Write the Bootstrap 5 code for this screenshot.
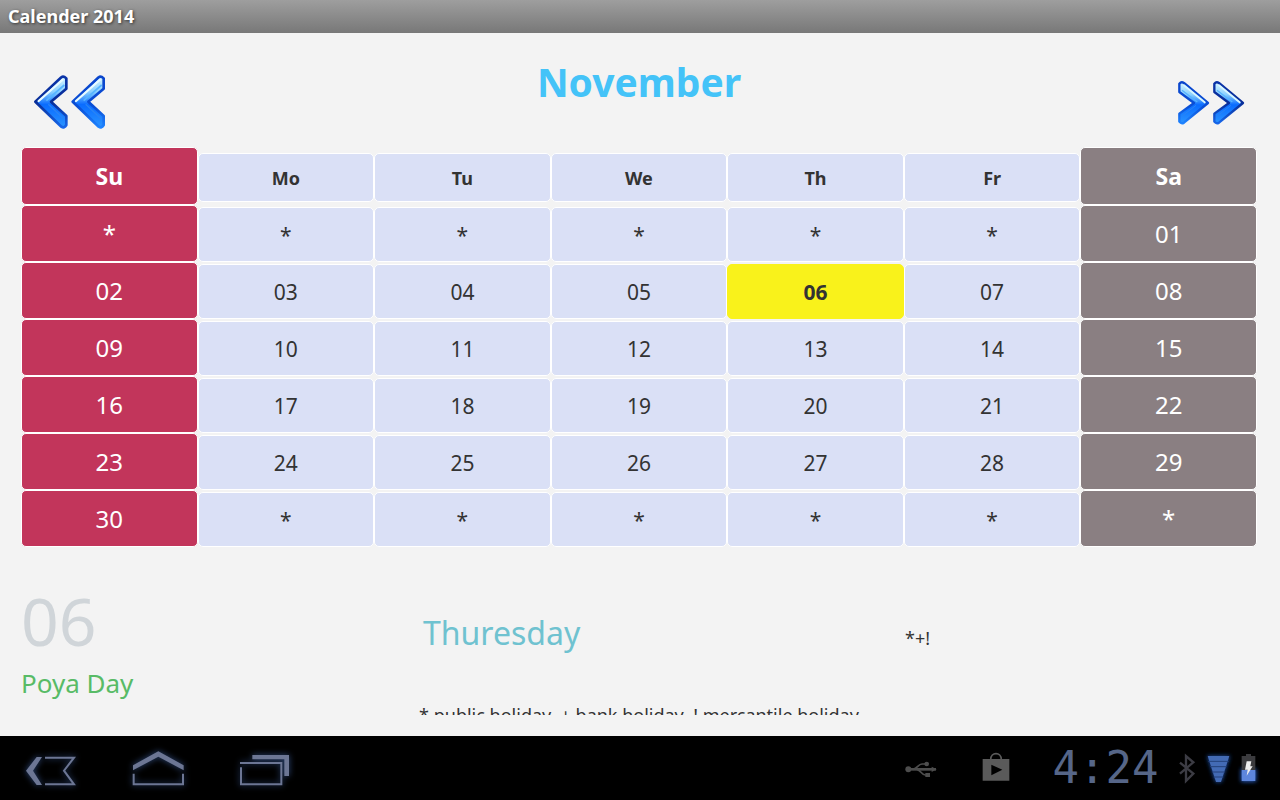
<!DOCTYPE html>
<html lang="en">
<head>
<meta charset="utf-8">
<meta name="viewport" content="width=device-width, initial-scale=1">
<title>Calender 2014</title>
<link href="https://cdn.jsdelivr.net/npm/bootstrap@5.3.0/dist/css/bootstrap.min.css" rel="stylesheet">
<style>
  body { font-family: "Noto Sans", "Open Sans", sans-serif; background: #f3f3f3; color: #333; }
  .app-title { height: 33px; padding: 0 8px; font-size: 18px; line-height: 32px; background: linear-gradient(#9e9e9e, #787878); text-shadow: 1px 1px 3px #333; }
  .screen { padding: 0 23px 21px 21px; }
  .month-bar { height: 114px; flex-shrink: 0; }
  .month-name { font-size: 39px; line-height: 52px; color: #44c3f8; padding-top: 23px; }
  .step-btn { flex: 1 0 0; padding-top: 26px; }
  .step-btn svg { display: block; }
  .days { table-layout: fixed; border-collapse: separate; border-spacing: 0; flex-shrink: 0; }
  .days th, .days td { padding: 2px 0 0; height: 57px; vertical-align: top; text-align: center; }
  .days .end { padding: 0; }
  .day { display: block; width: 100%; height: 55px; border: 1px solid #fff; border-radius: 5px; padding: 1px 0 0; background: #dae0f6; color: #333; font-size: 21px; line-height: 53px; }
  .days thead th { height: 58px; }
  .days thead .day { height: 49px; margin-top: 4px; font-size: 18px; line-height: 47px; }
  .end .day { height: 57px; padding-top: 0; font-size: 24px; line-height: 55px; color: #fff; }
  .days thead .end .day { height: 58px; margin-top: 0; font-size: 23px; line-height: 56px; }
  .sun .day { background: #c2355b; }
  .sat .day { background: #8a7f82; }
  .day.today { background: #f9f21b; border-color: #f9f21b; font-weight: 700; }
  .info { display: grid; grid-template-columns: 402fr 482fr 352fr; flex-shrink: 0; padding-top: 32px; }
  .big-date { font-size: 66px; line-height: 82px; color: #d0d5d9; }
  .weekday { font-size: 32px; line-height: 44px; color: #6fc2d0; padding-top: 32px; }
  .flags { font-size: 18px; line-height: 28px; padding-top: 45px; }
  .holiday { font-size: 26px; line-height: 44px; color: #58bb66; }
  .legend-line { font-size: 18px; line-height: 20px; flex-shrink: 0; }
  .sysbar { height: 64px; flex-shrink: 0; padding: 0 19px 0 10px; }
  .nav-keys { gap: 28px; }
  .nav-keys svg { display: block; filter: drop-shadow(0 0 3px #2f4a7c); }
  .clock { font-family: "DejaVu Sans Mono", monospace; font-size: 44px; line-height: 64px; color: #566688; width: 131px; text-align: center; }
</style>
</head>
<body>
<div class="d-flex flex-column vh-100">
  <header class="app-title text-white fw-bold flex-shrink-0">Calender 2014</header>

  <main class="screen flex-grow-1 d-flex flex-column overflow-hidden">
    <div class="d-flex flex-column flex-grow-1 overflow-hidden">
    <div class="month-bar d-flex align-items-start">
      <div class="step-btn d-flex">
        <button type="button" class="btn border-0 p-0" aria-label="Previous month">
          <svg width="100" height="84" viewBox="63 177 300 252">
            <defs>
              <linearGradient id="blue" x1="0" y1="0" x2="0" y2="1"><stop offset="0" stop-color="#d5f5ff"/><stop offset=".3" stop-color="#8bd0ff"/><stop offset=".55" stop-color="#0a6cff"/><stop offset="1" stop-color="#2a94ff"/></linearGradient>
              <linearGradient id="rim" x1="0" y1="0" x2="0" y2="1"><stop offset="0" stop-color="#0a33a8"/><stop offset=".5" stop-color="#082d98"/><stop offset="1" stop-color="#1767ea"/></linearGradient>
              <linearGradient id="rim2" x1="0" y1="0" x2="0" y2="1"><stop offset="0" stop-color="#0a45cc"/><stop offset=".6" stop-color="#0a4fd6"/><stop offset="1" stop-color="#1e83ff"/></linearGradient>
              <g id="chev"><path d="M106 305 184 232Q190 226 199 235V266L153 305 199 348V375Q193 386 184 380Z" fill="url(#blue)" stroke-width="8" stroke-linejoin="round"/><path d="M116 303 187 240" stroke="#e8fbff" stroke-width="7" stroke-linecap="round"/><path d="M139 302 193 255" stroke="#56b4ff" stroke-width="5"/><path d="M145 313 191 356" stroke="#2a84f4" stroke-width="4"/></g>
            </defs>
            <use href="#chev" stroke="url(#rim)"/>
            <use href="#chev" x="112" stroke="url(#rim2)"/>
          </svg>
        </button>
      </div>
      <h1 class="month-name fw-bold m-0">November</h1>
      <div class="step-btn d-flex justify-content-end">
        <button type="button" class="btn border-0 p-0" aria-label="Next month">
          <svg width="90" height="84" viewBox="261 -3 270 252">
            <defs><g id="chevR"><path d="M384 129 312 69Q304 64 298 71V96L342 129 298 161V185Q304 193 312 188Z" fill="url(#blue)" stroke-width="7" stroke-linejoin="round"/><path d="M374 127 312 76" stroke="#d8f6ff" stroke-width="6" stroke-linecap="round"/><path d="M352 126 306 91" stroke="#56b4ff" stroke-width="4"/><path d="M348 136 305 169" stroke="#2a84f4" stroke-width="3"/></g></defs>
            <use href="#chevR" stroke="url(#rim2)"/>
            <use href="#chevR" x="105" stroke="url(#rim)"/>
          </svg>
        </button>
      </div>
    </div>

    <table class="days w-100">
      <thead>
        <tr><th class="end sun"><div class="day">Su</div></th><th><div class="day">Mo</div></th><th><div class="day">Tu</div></th><th><div class="day">We</div></th><th><div class="day">Th</div></th><th><div class="day">Fr</div></th><th class="end sat"><div class="day">Sa</div></th></tr>
      </thead>
      <tbody>
        <tr><td class="end sun"><button class="day">*</button></td><td><button class="day">*</button></td><td><button class="day">*</button></td><td><button class="day">*</button></td><td><button class="day">*</button></td><td><button class="day">*</button></td><td class="end sat"><button class="day">01</button></td></tr>
        <tr><td class="end sun"><button class="day">02</button></td><td><button class="day">03</button></td><td><button class="day">04</button></td><td><button class="day">05</button></td><td><button class="day today">06</button></td><td><button class="day">07</button></td><td class="end sat"><button class="day">08</button></td></tr>
        <tr><td class="end sun"><button class="day">09</button></td><td><button class="day">10</button></td><td><button class="day">11</button></td><td><button class="day">12</button></td><td><button class="day">13</button></td><td><button class="day">14</button></td><td class="end sat"><button class="day">15</button></td></tr>
        <tr><td class="end sun"><button class="day">16</button></td><td><button class="day">17</button></td><td><button class="day">18</button></td><td><button class="day">19</button></td><td><button class="day">20</button></td><td><button class="day">21</button></td><td class="end sat"><button class="day">22</button></td></tr>
        <tr><td class="end sun"><button class="day">23</button></td><td><button class="day">24</button></td><td><button class="day">25</button></td><td><button class="day">26</button></td><td><button class="day">27</button></td><td><button class="day">28</button></td><td class="end sat"><button class="day">29</button></td></tr>
        <tr><td class="end sun"><button class="day">30</button></td><td><button class="day">*</button></td><td><button class="day">*</button></td><td><button class="day">*</button></td><td><button class="day">*</button></td><td><button class="day">*</button></td><td class="end sat"><button class="day">*</button></td></tr>
      </tbody>
    </table>

    <section class="info">
      <div>
        <div class="big-date">06</div>
        <div class="holiday">Poya Day</div>
      </div>
      <div class="weekday">Thuresday</div>
      <div class="flags">*+!</div>
    </section>
    <div class="legend-line text-center">* public holiday&nbsp; + bank holiday&nbsp; ! mercantile holiday</div>
    </div>
  </main>

  <footer class="sysbar bg-black d-flex justify-content-between align-items-center">
    <nav class="nav-keys d-flex" aria-label="System">
      <button type="button" class="btn border-0 p-0" aria-label="Back">
        <svg width="80" height="64" viewBox="30 0 240 192"><path d="M78 104 110 63H126L99 104 126 147H110Z" fill="#6c7694"/><path d="M135 65H222L192 104 222 145H135" fill="none" stroke="#6c7694" stroke-width="6"/></svg>
      </button>
      <button type="button" class="btn border-0 p-0" aria-label="Home">
        <svg width="80" height="64" viewBox="354 0 240 192"><path d="M399 88 475 46 551 88V103L475 62 399 103Z" fill="#6c7694"/><path d="M401 113V145H549V113" fill="none" stroke="#6c7694" stroke-width="6"/></svg>
      </button>
      <button type="button" class="btn border-0 p-0" aria-label="Recent apps">
        <svg width="80" height="64" viewBox="678 0 240 192"><path d="M757 57H867V120H853V70H757Z" fill="#6c7694"/><path d="M720 81H844V145H723V94" fill="none" stroke="#6c7694" stroke-width="6"/></svg>
      </button>
    </nav>
    <div class="d-flex align-items-center">
      <svg width="139" height="64" viewBox="30 0 417 192" aria-label="USB connected, Play Store">
        <g fill="none" stroke="#4d4d4d" stroke-width="5"><path d="M50 100H135" stroke-width="8"/><path d="M66 100C80 98 81 84 93 84H104M78 100C90 103 91 117 103 117H110"/></g>
        <g fill="#4d4d4d"><circle cx="52" cy="100" r="9"/><circle cx="107" cy="84" r="7"/><path d="M103 111H117V123H103ZM122 92 137 100 122 108Z"/></g>
        <path d="M275 69H355V134H275ZM301 86V118L334 101Z" fill="#5a5a5a" fill-rule="evenodd"/>
        <path d="M299 71C299 47 331 47 331 71" fill="none" stroke="#5a5a5a" stroke-width="5"/>
      </svg>
      <time class="clock" datetime="16:24">4:24</time>
      <svg width="90" height="64" viewBox="273 0 270 192" aria-label="Bluetooth, signal, battery charging">
        <defs><filter id="halo" x="-40%" y="-30%" width="180%" height="160%"><feGaussianBlur stdDeviation="7"/></filter></defs>
        <path d="M300 80 340 113 318 135V60L340 79 300 113" fill="none" stroke="#3c3c44" stroke-width="7"/>
        <path d="M381 59H450L424 139H407Z" fill="#1d4a9c" filter="url(#halo)"/>
        <path d="M383 60H448L423 138H408Z" fill="#436bb5"/>
        <path d="M385 76H446M390 92H440M396 108H435M401 123H430" stroke="#24417a" stroke-width="3"/>
        <path d="M483 98H528V137H483Z" fill="#275fc4" filter="url(#halo)"/>
        <path d="M498 54H513V60H526V103H485V60H498Z" fill="#3b3b3e"/>
        <path d="M485 102H526V135H485Z" fill="#5d86dc"/>
        <path d="M500 76H514L511 91H518L500 119 503 101H495Z" fill="#eee"/>
      </svg>
    </div>
  </footer>
</div>
<script src="https://cdn.jsdelivr.net/npm/bootstrap@5.3.0/dist/js/bootstrap.bundle.min.js"></script>
</body>
</html>
